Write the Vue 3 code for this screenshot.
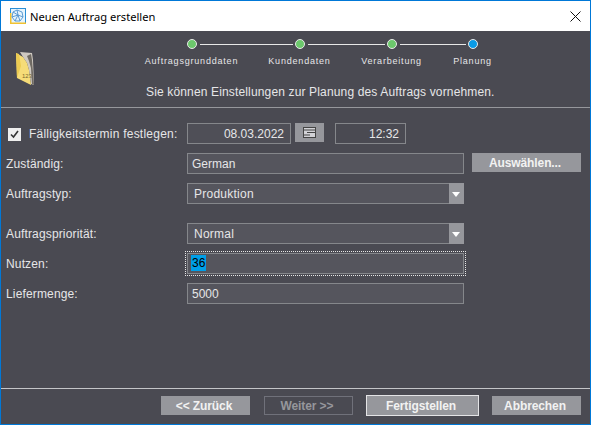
<script setup>
const steps = [
  { label: 'Auftragsgrunddaten', done: true, x: 190.5 },
  { label: 'Kundendaten', done: true, x: 298.5 },
  { label: 'Verarbeitung', done: true, x: 390.5 },
  { label: 'Planung', done: false, x: 471.5 }
];
</script>

<template>
  <div class="window">
    <header class="titlebar">
      <svg class="app-icon" width="16" height="16" viewBox="0 0 16 16">
        <rect x="0.5" y="0.5" width="15" height="15" fill="#e6f4fc" stroke="#2b8fd6" />
        <path d="M0 14.5h16v1.5H0z" fill="#f2c230" />
        <path d="M0 5h1.5v11H0z" fill="#f2c230" />
        <path d="M3 4l4-2 5 2 1 5-3 4-5 0-3-4zM7 2l1 5 5 2M8 7l-5-3M8 7l-3 6M8 7l2 6M2 9l6-2" fill="none" stroke="#4f93cf" stroke-width="0.9" />
      </svg>
      <span class="title">Neuen Auftrag erstellen</span>
      <svg class="close" width="11" height="11" viewBox="0 0 11 11">
        <path d="M0.5 0.5l10 10M10.5 0.5l-10 10" stroke="#111" stroke-width="1" fill="none" />
      </svg>
    </header>

    <div class="content">
      <section class="head">
        <svg class="folder" width="20" height="34" viewBox="0 0 20 34">
          <path d="M4 0L16 1L17 8L18 33L15 32L13 18L11 11L7 5Z" fill="#cfc9c1" />
          <path d="M11 4L15 2L16 8L18 33L16 32L15 16L13 9Z" fill="#6f6a63" />
          <path d="M0 1L7 5L11 11L13 18L15 33L1 26Z" fill="#f6dc78" />
          <path d="M0 1L3 2L5 14L1 26Z" fill="#eccb52" />
          <text x="6" y="26" class="folder-num">123</text>
        </svg>
        <div class="stepper">
          <template v-for="(s, i) in steps" :key="s.label">
            <span class="dot" :class="{ current: !s.done }" :style="{ left: s.x - 5 + 'px' }"></span>
            <span v-if="i < 3" class="link" :style="{ left: s.x + 8 + 'px', width: steps[i + 1].x - s.x - 15 + 'px' }"></span>
            <span class="step-label" :style="{ left: s.x + 'px' }">{{ s.label }}</span>
          </template>
        </div>
        <p class="hint">Sie können Einstellungen zur Planung des Auftrags vornehmen.</p>
      </section>

      <main class="form">
        <div class="row">
          <label class="label check-label">
            <span class="check">
              <svg width="9" height="9" viewBox="0 0 9 9"><path d="M1 4.5l2.5 2.5 4.5-6" fill="none" stroke="#333" stroke-width="1.6" /></svg>
            </span>
            Fälligkeitstermin festlegen:
          </label>
          <div class="field date">08.03.2022</div>
          <button class="cal-btn">
            <svg width="13" height="11" viewBox="0 0 13 11">
              <rect x="0.5" y="0.5" width="12" height="10" fill="#d2d2d6" stroke="#444" />
              <path d="M1 3h11M4 5.5h8M1 8h6" stroke="#444" stroke-width="1" />
            </svg>
          </button>
          <div class="field time">12:32</div>
        </div>

        <div class="row">
          <span class="label">Zuständig:</span>
          <div class="field wide">German</div>
          <button class="btn pick">Auswählen...</button>
        </div>

        <div class="row gap-after">
          <span class="label">Auftragstyp:</span>
          <div class="field wide select">
            Produktion
            <span class="arrow"></span>
          </div>
        </div>

        <div class="row">
          <span class="label">Auftragspriorität:</span>
          <div class="field wide select">
            Normal
            <span class="arrow"></span>
          </div>
        </div>

        <div class="row">
          <span class="label">Nutzen:</span>
          <div class="field wide focused"><span class="selected">36</span></div>
        </div>

        <div class="row">
          <span class="label">Liefermenge:</span>
          <div class="field wide">5000</div>
        </div>
      </main>

      <footer class="footer">
        <button class="btn nav">&lt;&lt; Zurück</button>
        <button class="btn nav disabled">Weiter &gt;&gt;</button>
        <button class="btn finish">Fertigstellen</button>
        <button class="btn nav">Abbrechen</button>
      </footer>
    </div>
  </div>
</template>

<style>
html, body {
  margin: 0;
  background: #4a4a52;
}
</style>

<style scoped>
.window {
  width: 591px;
  height: 425px;
  box-sizing: border-box;
  border: 1px solid #0078d7;
  border-top: none;
  display: flex;
  flex-direction: column;
  font-family: "Liberation Sans", Arial, sans-serif;
  font-size: 12px;
  letter-spacing: 0.15px;
  color: #e6e6e8;
  overflow: hidden;
}

.titlebar {
  height: 31px;
  flex: none;
  background: #fff;
  border-top: 1px solid #0078d7;
  box-sizing: border-box;
  display: flex;
  align-items: center;
  padding: 0 9px;
  color: #000;
}

.app-icon {
  margin-right: 4px;
}

.title {
  flex: 1;
  font-family: "Noto Sans", sans-serif;
  font-size: 11.15px;
  letter-spacing: 0;
}

.content {
  flex: 1;
  background: #4a4a52;
  display: flex;
  flex-direction: column;
}

.head {
  position: relative;
  height: 76px;
  flex: none;
  border-bottom: 1px solid #96979c;
}

.folder {
  position: absolute;
  left: 15px;
  top: 21px;
}

.folder-num {
  font-size: 6px;
  fill: #7a6a30;
  letter-spacing: 0;
  font-family: "Liberation Sans", sans-serif;
}

.stepper {
  position: relative;
  height: 45px;
}

.dot {
  position: absolute;
  top: 8px;
  width: 8px;
  height: 8px;
  box-sizing: content-box;
  border: 1px solid #e8e8e8;
  border-radius: 50%;
  background: #6cc86c;
}

.dot.current {
  background: #0a9be6;
}

.link {
  position: absolute;
  top: 13px;
  height: 1px;
  background: #e8e8e8;
}

.step-label {
  position: absolute;
  top: 25px;
  transform: translateX(-50%);
  font-size: 9px;
  letter-spacing: 0.8px;
  white-space: nowrap;
}

.hint {
  margin: 9px 0 0;
  padding-left: 145px;
  white-space: nowrap;
}

.form {
  flex: 1;
  padding-top: 15px;
}

.row {
  display: flex;
  align-items: flex-start;
  height: 21px;
  margin-bottom: 9px;
}

.row.gap-after {
  margin-bottom: 19px;
}

.label {
  width: 186px;
  flex: none;
  box-sizing: border-box;
  padding-left: 5px;
  line-height: 23px;
}

.check-label {
  display: flex;
  align-items: center;
  padding-left: 7px;
  gap: 8px;
  letter-spacing: 0.23px;
}

.check {
  width: 13px;
  height: 13px;
  background: #eee;
  display: flex;
  align-items: center;
  justify-content: center;
}

.field {
  box-sizing: border-box;
  height: 21px;
  border: 1px solid #85878b;
  background: #55555d;
  line-height: 18px;
  padding: 1px 4px 0;
  position: relative;
  letter-spacing: 0;
}

.date {
  width: 104px;
  text-align: right;
  padding-right: 6px;
  background: #4f4f57;
}

.time {
  width: 71px;
  text-align: right;
  padding-right: 6px;
  margin-left: 11px;
  background: #4a4a52;
}

.wide {
  width: 277px;
}

.select {
  padding-left: 6px;
  letter-spacing: 0.25px;
}

.arrow {
  position: absolute;
  right: -1px;
  top: -1px;
  width: 15px;
  height: 21px;
  background: #96979c;
}

.arrow::after {
  content: "";
  position: absolute;
  left: 3px;
  top: 9px;
  border-left: 4.5px solid transparent;
  border-right: 4.5px solid transparent;
  border-top: 5px solid #fff;
}

.focused {
  outline: 1px dotted #e8e8e8;
  outline-offset: 1px;
  padding-left: 3px;
}

.selected {
  display: inline-block;
  height: 16px;
  line-height: 16px;
  padding: 0 1px;
  vertical-align: top;
  background: #009fe8;
  color: #000;
}

.cal-btn {
  width: 29px;
  height: 19px;
  margin-left: 4px;
  padding: 0;
  border: none;
  background: #96979c;
  display: flex;
  align-items: center;
  justify-content: center;
}

.btn {
  height: 19px;
  padding: 0 3px 0 0;
  border: none;
  background: #96979c;
  color: #f2f2f2;
  font-family: "Liberation Sans", Arial, sans-serif;
  font-size: 12px;
  font-weight: bold;
  letter-spacing: -0.1px;
  box-sizing: border-box;
}

.pick {
  width: 109px;
  margin-left: 8px;
}

.footer {
  flex: none;
  height: 36px;
  box-sizing: border-box;
  border-top: 1px solid #c4c5c8;
  display: flex;
  align-items: center;
  padding: 0 9px 2px 160px;
}

.nav {
  width: 89px;
}

.disabled {
  background: transparent;
  border: 1px solid #70717a;
  color: #96979c;
  margin-left: 14px;
}

.finish {
  width: 113px;
  height: 21px;
  margin: 0 13px;
  border: 1px solid #e4e4e6;
}
</style>
